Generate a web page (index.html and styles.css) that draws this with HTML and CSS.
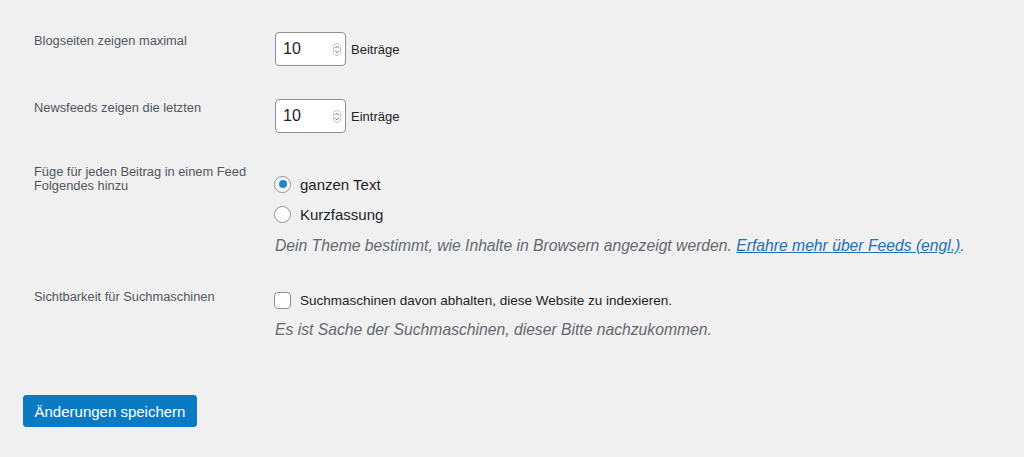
FILE: index.html
```html
<!DOCTYPE html>
<html lang="de">
<head>
<meta charset="utf-8">
<link rel="stylesheet" href="styles.css">
</head>
<body>
<div class="page">
  <div class="row row-1">
    <div class="label">Blogseiten zeigen maximal</div>
    <div class="field inline">
      <div class="num"><span class="num-val">10</span><svg class="spin" width="8" height="13" viewBox="0 0 8 13"><rect x="0.5" y="0.5" width="7" height="12" rx="3.5" fill="none" stroke="#c3c4c7"/><path d="M2.3 5 L4 3.3 L5.7 5 M2.3 8 L4 9.7 L5.7 8" fill="none" stroke="#50575e" stroke-width="0.9"/></svg></div>
      <span class="unit">Beiträge</span>
    </div>
  </div>
  <div class="row row-2">
    <div class="label">Newsfeeds zeigen die letzten</div>
    <div class="field inline">
      <div class="num"><span class="num-val">10</span><svg class="spin" width="8" height="13" viewBox="0 0 8 13"><rect x="0.5" y="0.5" width="7" height="12" rx="3.5" fill="none" stroke="#c3c4c7"/><path d="M2.3 5 L4 3.3 L5.7 5 M2.3 8 L4 9.7 L5.7 8" fill="none" stroke="#50575e" stroke-width="0.9"/></svg></div>
      <span class="unit">Einträge</span>
    </div>
  </div>
  <div class="row row-3">
    <div class="label">Füge für jeden Beitrag in einem Feed Folgendes hinzu</div>
    <div class="field stack">
      <div class="opt opt-first"><span class="radio checked"></span><span class="opt-text">ganzen Text</span></div>
      <div class="opt"><span class="radio"></span><span class="opt-text">Kurzfassung</span></div>
      <p class="desc">Dein Theme bestimmt, wie Inhalte in Browsern angezeigt werden. <a href="#" class="link">Erfahre mehr über Feeds (engl.)</a>.</p>
    </div>
  </div>
  <div class="row row-4">
    <div class="label">Sichtbarkeit für Suchmaschinen</div>
    <div class="field stack">
      <div class="opt check-opt"><span class="checkbox"></span><span class="check-text">Suchmaschinen davon abhalten, diese Website zu indexieren.</span></div>
      <p class="desc desc-2">Es ist Sache der Suchmaschinen, dieser Bitte nachzukommen.</p>
    </div>
  </div>
  <div class="submit">
    <button class="btn" type="button">Änderungen speichern</button>
  </div>
</div>
</body>
</html>
```
FILE: styles.css
```css
html, body {
  margin: 0;
  padding: 0;
  background: #f0f0f1;
}
body {
  font-family: "Liberation Sans", Arial, sans-serif;
  color: #3c434a;
  width: 1024px;
  height: 457px;
  overflow: hidden;
}
.page {
  padding: 32px 0 0 0;
}
.row {
  display: flex;
  align-items: flex-start;
}
.label {
  box-sizing: border-box;
  width: 275px;
  padding-left: 34px;
  padding-right: 20px;
  font-size: 12.85px;
  line-height: 14px;
  color: #50575e;
}
.row-1 .label, .row-2 .label { padding-top: 2px; }
.row-2 { margin-top: 33px; }
.row-3 { margin-top: 32px; }
.row-4 { margin-top: 35px; }
.field.inline {
  display: flex;
  align-items: center;
  gap: 5px;
}
.num {
  box-sizing: border-box;
  width: 71px;
  height: 34px;
  background: #fff;
  border: 1px solid #8c8f94;
  border-radius: 4px;
  display: flex;
  align-items: center;
  justify-content: space-between;
  padding: 0 4px 0 7px;
}
.num-val {
  font-size: 16px;
  color: #1d2327;
}
.spin { display: block; margin-top: 1px; }
.unit {
  font-size: 13px;
  color: #1d2327;
  margin-top: 1px;
}
.stack {
  display: flex;
  flex-direction: column;
}
.opt {
  display: flex;
  align-items: center;
  height: 30px;
}
.opt-first { margin-top: 4px; }
.radio {
  box-sizing: border-box;
  width: 17px;
  height: 17px;
  border: 1px solid #8c8f94;
  border-radius: 50%;
  background: #fff;
  position: relative;
  margin-left: -1px;
}
.radio.checked::after {
  content: "";
  position: absolute;
  left: 3.5px;
  top: 3.5px;
  width: 8px;
  height: 8px;
  border-radius: 50%;
  background: #1d87c8;
}
.opt-text {
  font-size: 15px;
  color: #1d2327;
  margin-left: 9px;
}
.desc {
  margin: 8px 0 0 0;
  font-size: 15.7px;
  line-height: 18px;
  font-style: italic;
  color: #646970;
}
.link {
  color: #2271b1;
  text-decoration: underline;
}
.check-opt {
  height: 20px;
  margin-top: 0;
}
.checkbox {
  box-sizing: border-box;
  width: 17px;
  height: 17px;
  border: 1px solid #8c8f94;
  border-radius: 4px;
  background: #fff;
  margin-left: -1px;
}
.check-text {
  font-size: 13.5px;
  color: #1d2327;
  margin-left: 9px;
}
.desc-2 { margin-top: 11px; }
.submit {
  padding: 56px 0 0 23px;
}
.btn {
  box-sizing: border-box;
  width: 174px;
  height: 32px;
  background: #0a7bc2;
  border: 1px solid #0a7bc2;
  border-radius: 3px;
  color: #fff;
  font-family: "Liberation Sans", Arial, sans-serif;
  font-size: 15px;
  padding: 0;
  text-align: center;
}
```
